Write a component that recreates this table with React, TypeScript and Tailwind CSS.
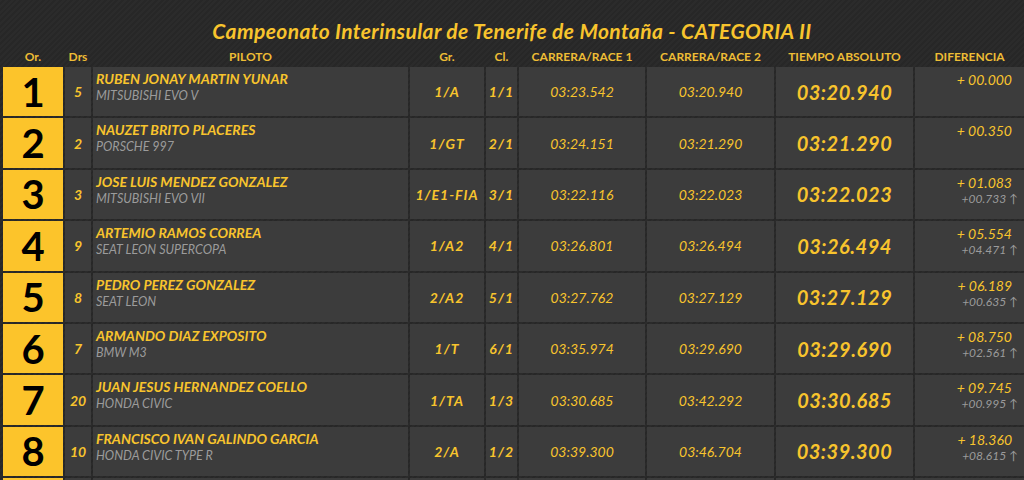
import React from 'react';

interface Row {
  pos: number;
  drs: string;
  name: string;
  car: string;
  gr: string;
  cl: string;
  r1: string;
  r2: string;
  abs: string;
  dif: string;
  dif2: string;
}

const ROWS: Row[] = [
  { pos: 1, drs: '5', name: 'RUBEN JONAY MARTIN YUNAR', car: 'MITSUBISHI EVO V', gr: '1/A', cl: '1/1', r1: '03:23.542', r2: '03:20.940', abs: '03:20.940', dif: '+ 00.000', dif2: '' },
  { pos: 2, drs: '2', name: 'NAUZET BRITO PLACERES', car: 'PORSCHE 997', gr: '1/GT', cl: '2/1', r1: '03:24.151', r2: '03:21.290', abs: '03:21.290', dif: '+ 00.350', dif2: '' },
  { pos: 3, drs: '3', name: 'JOSE LUIS MENDEZ GONZALEZ', car: 'MITSUBISHI EVO VII', gr: '1/E1-FIA', cl: '3/1', r1: '03:22.116', r2: '03:22.023', abs: '03:22.023', dif: '+ 01.083', dif2: '+00.733' },
  { pos: 4, drs: '9', name: 'ARTEMIO RAMOS CORREA', car: 'SEAT LEON SUPERCOPA', gr: '1/A2', cl: '4/1', r1: '03:26.801', r2: '03:26.494', abs: '03:26.494', dif: '+ 05.554', dif2: '+04.471' },
  { pos: 5, drs: '8', name: 'PEDRO PEREZ GONZALEZ', car: 'SEAT LEON', gr: '2/A2', cl: '5/1', r1: '03:27.762', r2: '03:27.129', abs: '03:27.129', dif: '+ 06.189', dif2: '+00.635' },
  { pos: 6, drs: '7', name: 'ARMANDO DIAZ EXPOSITO', car: 'BMW M3', gr: '1/T', cl: '6/1', r1: '03:35.974', r2: '03:29.690', abs: '03:29.690', dif: '+ 08.750', dif2: '+02.561' },
  { pos: 7, drs: '20', name: 'JUAN JESUS HERNANDEZ COELLO', car: 'HONDA CIVIC', gr: '1/TA', cl: '1/3', r1: '03:30.685', r2: '03:42.292', abs: '03:30.685', dif: '+ 09.745', dif2: '+00.995' },
  { pos: 8, drs: '10', name: 'FRANCISCO IVAN GALINDO GARCIA', car: 'HONDA CIVIC TYPE R', gr: '2/A', cl: '1/2', r1: '03:39.300', r2: '03:46.704', abs: '03:39.300', dif: '+ 18.360', dif2: '+08.615' },
];

const COLS = 'grid grid-cols-[60px_26px_315px_74px_31px_126px_127px_137px_1fr] gap-x-[2px]';
const ROW = `${COLS} grid-rows-[49.4px] h-[49.4px] shrink-0 overflow-hidden pl-[3px]`;
const cell = 'bg-[#3c3c3c] flex items-center justify-center';

export default function App() {
  return (
    <div className="w-[1024px] h-[480px] overflow-hidden bg-[repeating-linear-gradient(135deg,#2b2b2b_0px,#2b2b2b_2px,#272727_2px,#272727_4px)] font-['Lato','Liberation_Sans',sans-serif] text-[#f8c42d]">
      <h1 className="h-[46px] pt-[18px] text-center text-[21px] leading-[26px] font-bold italic tracking-[0.4px]">
        Campeonato Interinsular de Tenerife de Montaña - CATEGORIA II
      </h1>

      <div className={`${COLS} pl-[3px] h-[21px] items-center text-[12px] font-bold text-[#eebd35] text-center`}>
        <div>Or.</div>
        <div>Drs</div>
        <div>PILOTO</div>
        <div>Gr.</div>
        <div>Cl.</div>
        <div>CARRERA/RACE 1</div>
        <div>CARRERA/RACE 2</div>
        <div>TIEMPO ABSOLUTO</div>
        <div>DIFERENCIA</div>
      </div>

      <div className="flex flex-col gap-y-[2px]">
        {ROWS.map((r) => (
          <div key={r.pos} className={ROW}>
            <div className="bg-[#fcc42b] flex items-center justify-center text-black text-[40px] leading-none font-bold">
              {r.pos}
            </div>
            <div className={`${cell} italic font-bold text-[14px]`}>{r.drs}</div>
            <div className="bg-[#3c3c3c] flex flex-col pl-[3px] pt-[3px] italic">
              <span className="font-bold text-[14px] leading-[18px]">{r.name}</span>
              <span className="text-[12.5px] leading-[16px] text-[#9b9b9b]">{r.car}</span>
            </div>
            <div className={`${cell} italic font-bold text-[14px] tracking-[1px]`}>{r.gr}</div>
            <div className={`${cell} italic font-bold text-[14px] tracking-[1px]`}>{r.cl}</div>
            <div className={`${cell} italic text-[14px]`}>{r.r1}</div>
            <div className={`${cell} italic text-[14px]`}>{r.r2}</div>
            <div className={`${cell} italic font-bold text-[20px] tracking-[0.5px]`}>{r.abs}</div>
            <div className="bg-[#3c3c3c] flex flex-col items-end pr-[6px] pt-[4px] italic">
              <span className="text-[14px] leading-[17px] pr-[6px]">{r.dif}</span>
              {r.dif2 && (
                <span className="text-[12px] leading-[16px] text-[#9b9b9b]">
                  {r.dif2} <span className="not-italic">↑</span>
                </span>
              )}
            </div>
          </div>
        ))}
        {/* next row, only its top edge shows */}
        <div className={ROW}>
          <div className="bg-[#fcc42b]" />
          <div className="bg-[#3c3c3c]" />
          <div className="bg-[#3c3c3c]" />
          <div className="bg-[#3c3c3c]" />
          <div className="bg-[#3c3c3c]" />
          <div className="bg-[#3c3c3c]" />
          <div className="bg-[#3c3c3c]" />
          <div className="bg-[#3c3c3c]" />
          <div className="bg-[#3c3c3c]" />
        </div>
      </div>
    </div>
  );
}
